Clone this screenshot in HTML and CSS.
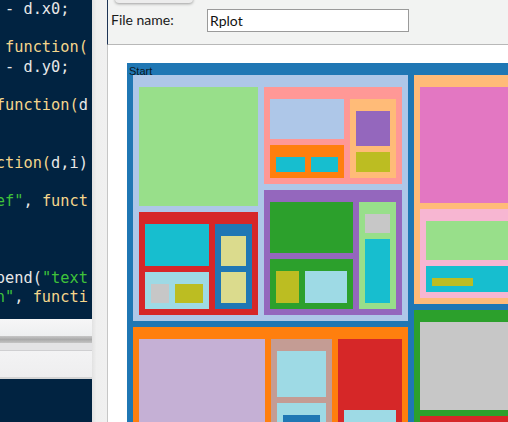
FILE: index.html
```html
<!DOCTYPE html>
<html>
<head>
<meta charset="utf-8">
<title>Rplot</title>
<link rel="stylesheet" href="styles.css">
</head>
<body>
<div class="app">
  <div class="editor">
    <div class="code">
      <div class="ln"> <span class="w">- d.x0;</span></div>
      <div class="ln"> </div>
      <div class="ln"> <span class="y">function(</span></div>
      <div class="ln"> <span class="w">- d.y0;</span></div>
      <div class="ln"> </div>
      <div class="ln"><span class="y">function(</span><span class="w">d</span></div>
      <div class="ln"> </div>
      <div class="ln"> </div>
      <div class="ln"><span class="y">ction(</span><span class="w">d,i)</span></div>
      <div class="ln"> </div>
      <div class="ln"><span class="g">ef"</span><span class="w">, </span><span class="y">funct</span></div>
      <div class="ln"> </div>
      <div class="ln"> </div>
      <div class="ln"> </div>
      <div class="ln"><span class="w">pend(</span><span class="g">"text</span></div>
      <div class="ln"><span class="g">n"</span><span class="w">, </span><span class="y">functi</span></div>
    </div>
    <div class="splitter">
      <div class="sp-a"></div>
      <div class="sp-b"></div>
      <div class="sp-c"></div>
      <div class="sp-d"></div>
      <div class="sp-e"></div>
      <div class="sp-f"></div>
    </div>
    <div class="console"></div>
  </div>
  <div class="divider"></div>
  <div class="dialog">
    <div class="dialog-top">
      <div class="tab-edge"></div>
      <span class="fn-label">File name:</span>
      <div class="fn-input">Rplot</div>
    </div>
    <div class="canvas-area">
      <div class="treemap">
        <span class="tm-label">Start</span>
        <div class="node c1" style="left:6px;top:12px;width:275px;height:246px"></div>
        <div class="node c3" style="left:12px;top:24px;width:119px;height:119px"></div>
        <div class="node c7" style="left:137px;top:24px;width:138px;height:97px"></div>
        <div class="node c1" style="left:143px;top:36px;width:74px;height:40px"></div>
        <div class="node c2" style="left:143px;top:82px;width:74px;height:33px"></div>
        <div class="node c19" style="left:149px;top:94px;width:29px;height:15px"></div>
        <div class="node c19" style="left:184px;top:94px;width:27px;height:15px"></div>
        <div class="node c2l" style="left:223px;top:36px;width:46px;height:79px"></div>
        <div class="node c8" style="left:229px;top:48px;width:34px;height:35px"></div>
        <div class="node c17" style="left:229px;top:89px;width:34px;height:20px"></div>
        <div class="node c6" style="left:12px;top:149px;width:119px;height:103px"></div>
        <div class="node c19" style="left:18px;top:161px;width:64px;height:42px"></div>
        <div class="node c20" style="left:18px;top:209px;width:64px;height:37px"></div>
        <div class="node c15" style="left:24px;top:221px;width:18px;height:19px"></div>
        <div class="node c17" style="left:48px;top:221px;width:28px;height:19px"></div>
        <div class="node c0" style="left:88px;top:161px;width:37px;height:85px"></div>
        <div class="node c18" style="left:94px;top:173px;width:25px;height:30px"></div>
        <div class="node c18" style="left:94px;top:209px;width:25px;height:31px"></div>
        <div class="node c8" style="left:137px;top:127px;width:138px;height:125px"></div>
        <div class="node c4" style="left:143px;top:139px;width:83px;height:51px"></div>
        <div class="node c4" style="left:143px;top:196px;width:83px;height:50px"></div>
        <div class="node c17" style="left:149px;top:208px;width:23px;height:32px"></div>
        <div class="node c20" style="left:178px;top:208px;width:42px;height:32px"></div>
        <div class="node c3" style="left:232px;top:139px;width:37px;height:107px"></div>
        <div class="node c15" style="left:238px;top:151px;width:25px;height:19px"></div>
        <div class="node c19" style="left:238px;top:176px;width:25px;height:64px"></div>
        <div class="node c2l" style="left:287px;top:12px;width:116px;height:229px"></div>
        <div class="node c12" style="left:293px;top:24px;width:104px;height:116px"></div>
        <div class="node c13" style="left:293px;top:146px;width:104px;height:89px"></div>
        <div class="node c3" style="left:299px;top:158px;width:92px;height:39px"></div>
        <div class="node c19" style="left:299px;top:203px;width:92px;height:26px"></div>
        <div class="node c17" style="left:305px;top:215px;width:41px;height:8px"></div>
        <div class="node c4" style="left:287px;top:247px;width:116px;height:200px"></div>
        <div class="node c15" style="left:293px;top:259px;width:104px;height:88px"></div>
        <div class="node c6" style="left:293px;top:353px;width:104px;height:100px"></div>
        <div class="node c2" style="left:6px;top:264px;width:275px;height:200px"></div>
        <div class="node c9" style="left:12px;top:276px;width:126px;height:200px"></div>
        <div class="node c11" style="left:144px;top:276px;width:61px;height:200px"></div>
        <div class="node c20" style="left:150px;top:288px;width:49px;height:46px"></div>
        <div class="node c20" style="left:150px;top:340px;width:49px;height:100px"></div>
        <div class="node c0" style="left:156px;top:352px;width:37px;height:100px"></div>
        <div class="node c6" style="left:211px;top:276px;width:64px;height:200px"></div>
        <div class="node c20" style="left:217px;top:347px;width:52px;height:100px"></div>
      </div>
    </div>
  </div>
</div>
</body>
</html>
```

FILE: styles.css
```css
html, body {
  margin: 0;
  padding: 0;
}
body {
  width: 508px;
  height: 422px;
  overflow: hidden;
  background: #ffffff;
}
.app {
  display: flex;
  width: 508px;
  height: 422px;
}
.editor {
  width: 92px;
  flex: none;
  display: flex;
  flex-direction: column;
  overflow: hidden;
}
.code {
  height: 319px;
  flex: none;
  background: #012341;
  overflow: hidden;
  font-family: "DejaVu Sans Mono", "Liberation Mono", monospace;
  font-size: 15.3px;
  line-height: 19.2px;
  color: #e6e6e6;
}
.ln {
  height: 19.2px;
  margin-left: -4.2px;
  white-space: pre;
}
.w { color: #e8e8e8; }
.y { color: #f5d68c; }
.g { color: #3fc23a; }

.splitter {
  height: 60px;
  flex: none;
  display: flex;
  flex-direction: column;
  box-shadow: inset -3px 0 3px -1px rgba(0, 0, 0, 0.18);
}
.sp-a { height: 17px; background: linear-gradient(#f6f6f7, #eeeff0); }
.sp-b { height: 7px; background: linear-gradient(#c6c6c6, #a9a9a9 50%, #c4c4c4); }
.sp-c { height: 7px; background: #e3e3e5; }
.sp-d { height: 1px; background: #cfcfd1; }
.sp-e { height: 26px; background: linear-gradient(#f3f3f4, #eeeeef); }
.sp-f { height: 2px; background: #d4d4d4; }
.console {
  flex: 1;
  background: #012341;
}

.divider {
  width: 15px;
  flex: none;
  background: linear-gradient(to right, #e2e2e2, #efefef 30%, #f0f0f0);
}

.dialog {
  flex: 1;
  display: flex;
  flex-direction: column;
  min-width: 0;
}
.dialog-top {
  position: relative;
  flex: none;
  display: flex;
  align-items: center;
  background: #f2f3f2;
  border-left: 1px solid #1d3355;
  border-bottom: 1px solid #b8b8b8;
  padding-left: 3px;
  box-sizing: border-box;
  height: 45px;
  font-family: "Lato", "Open Sans", sans-serif;
  font-size: 14px;
  color: #1a1a1a;
}
.tab-edge {
  position: absolute;
  left: 7px;
  top: -8px;
  width: 78px;
  height: 11px;
  background: #ececec;
  border-radius: 0 0 4px 4px;
  box-shadow: 0 1px 3px rgba(0, 0, 0, 0.35);
}
.fn-label {
  width: 96px;
  flex: none;
  margin-top: -5px;
}
.fn-input {
  width: 202px;
  height: 23px;
  box-sizing: border-box;
  border: 1px solid #9a9a9a;
  background: #ffffff;
  padding-left: 2px;
  line-height: 21px;
  color: #111111;
  margin-top: -4px;
}

.canvas-area {
  flex: 1;
  background: #ffffff;
  border-left: 1px solid #c6c6c6;
  padding: 18px 0 0 19px;
  overflow: hidden;
}
.treemap {
  position: relative;
  width: 400px;
  height: 380px;
  background: #1f77b4;
}
.tm-label {
  position: absolute;
  left: 2px;
  top: 2px;
  font-family: "Liberation Sans", Arial, sans-serif;
  font-size: 11px;
  line-height: 13px;
  color: #0b1622;
}
.node { position: absolute; }
.c0 { background: #1f77b4; }
.c1 { background: #aec7e8; }
.c2 { background: #ff7f0e; }
.c2l { background: #ffbb78; }
.c3 { background: #98df8a; }
.c4 { background: #2ca02c; }
.c6 { background: #d62728; }
.c7 { background: #ff9896; }
.c8 { background: #9467bd; }
.c9 { background: #c5b0d5; }
.c11 { background: #c49c94; }
.c12 { background: #e377c2; }
.c13 { background: #f7b6d2; }
.c15 { background: #c7c7c7; }
.c17 { background: #bcbd22; }
.c18 { background: #dbdb8d; }
.c19 { background: #17becf; }
.c20 { background: #9edae5; }
```
